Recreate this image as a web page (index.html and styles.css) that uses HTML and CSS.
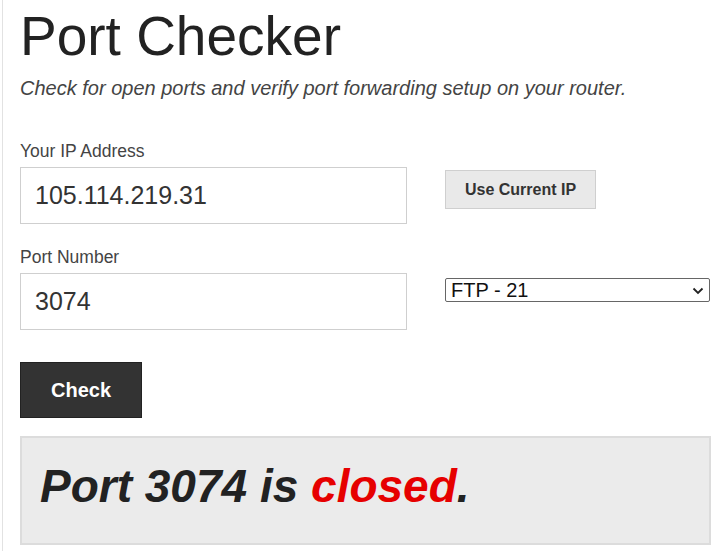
FILE: index.html
```html
<!DOCTYPE html>
<html lang="en">
<head>
<meta charset="utf-8">
<title>Port Checker</title>
<link rel="stylesheet" href="styles.css">
</head>
<body>
<div class="page">
  <h1 class="title">Port Checker</h1>
  <p class="subtitle">Check for open ports and verify port forwarding setup on your router.</p>
  <div class="form">
    <label class="label" for="ip">Your IP Address</label>
    <div></div>
    <input class="text-input" id="ip" type="text" value="105.114.219.31">
    <button class="btn-light" type="button">Use Current IP</button>
    <label class="label label-second" for="port">Port Number</label>
    <div></div>
    <input class="text-input" id="port" type="text" value="3074">
    <div class="select-wrap">
      <select class="select">
        <option>FTP - 21</option>
      </select>
      <svg class="chevron" width="12" height="8" viewBox="0 0 12 8"><path d="M1.5 1.5 L6 6 L10.5 1.5" fill="none" stroke="#222" stroke-width="1.8"/></svg>
    </div>
  </div>
  <button class="btn-dark" type="button">Check</button>
  <div class="result">Port 3074 is <span class="closed">closed</span>.</div>
</div>
</body>
</html>
```

FILE: styles.css
```css
html, body {
  margin: 0;
  padding: 0;
  background: #fff;
}
body {
  font-family: "Liberation Sans", Arial, sans-serif;
  color: #222;
}
.page {
  margin-left: 2px;
  border-left: 1px solid #e2e2e2;
  padding: 8px 0 6px 17px;
  min-height: 537px;
}
.title {
  margin: 0;
  font-size: 55px;
  line-height: 56px;
  font-weight: normal;
  color: #222;
}
.subtitle {
  margin: 14px 0 0;
  font-size: 20px;
  line-height: 20px;
  font-style: italic;
  color: #444;
}
.form {
  display: grid;
  grid-template-columns: 387px 265px;
  column-gap: 38px;
  margin-top: 45px;
}
.label {
  font-size: 17.5px;
  line-height: 17px;
  color: #444;
  margin-bottom: 7px;
}
.label-second {
  margin-top: 25px;
}
.text-input {
  box-sizing: border-box;
  width: 387px;
  height: 57px;
  border: 1px solid #cfcfcf;
  padding: 0 14px;
  font-family: "Liberation Sans", Arial, sans-serif;
  font-size: 25px;
  color: #333;
  background: #fff;
  outline: none;
  margin: 0;
}
.btn-light {
  justify-self: start;
  align-self: start;
  margin-top: 3px;
  box-sizing: border-box;
  width: 151px;
  height: 39px;
  background: #e9e9e9;
  border: 1px solid #cfcfcf;
  font-family: "Liberation Sans", Arial, sans-serif;
  font-weight: bold;
  font-size: 16px;
  color: #333;
  padding: 0;
}
.select-wrap {
  position: relative;
  align-self: start;
  margin-top: 5px;
  width: 265px;
  height: 24px;
}
.select {
  appearance: none;
  -webkit-appearance: none;
  box-sizing: border-box;
  width: 265px;
  height: 24px;
  border: 1px solid #666;
  border-radius: 2px;
  background: #fff;
  padding: 0 0 0 5px;
  font-family: "Liberation Sans", Arial, sans-serif;
  font-size: 20px;
  line-height: 22px;
  color: #111;
  margin: 0;
}
.chevron {
  position: absolute;
  right: 6px;
  top: 9px;
  pointer-events: none;
}
.btn-dark {
  display: block;
  margin-top: 32px;
  box-sizing: border-box;
  width: 122px;
  height: 56px;
  background: #333;
  border: 1px solid #222;
  color: #fff;
  font-family: "Liberation Sans", Arial, sans-serif;
  font-weight: bold;
  font-size: 20px;
  padding: 0;
}
.result {
  box-sizing: border-box;
  margin-top: 18px;
  width: 691px;
  height: 109px;
  background: #ebebeb;
  border: 2px solid #dcdcdc;
  padding: 25px 0 0 18px;
  font-size: 46px;
  line-height: 46px;
  font-weight: bold;
  font-style: italic;
  color: #222;
}
.closed {
  color: #e60000;
}
```
